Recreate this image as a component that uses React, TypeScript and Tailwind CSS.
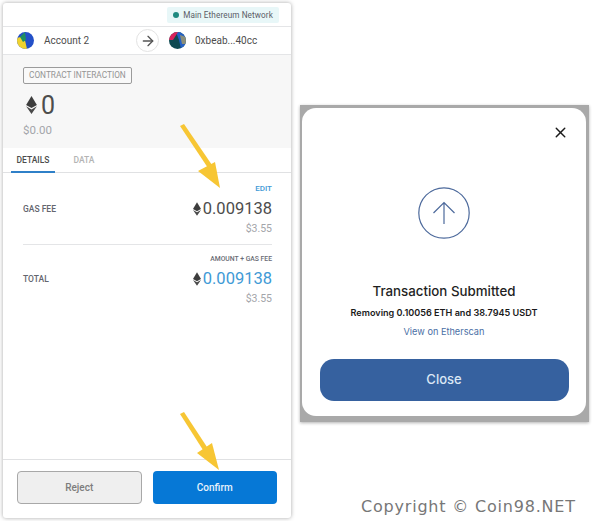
import { ArrowRight, X } from "lucide-react";

const sans = "font-['Roboto',sans-serif]";

function EthIcon({ className }: { className?: string }) {
  return (
    <svg viewBox="0 0 12 20" className={className}>
      <path d="M6 0L0 10l6 3.4L12 10z" fill="#3d3d3d" />
      <path d="M0 11.4L6 20l6-8.6-6 3.5z" fill="#4a4a4a" />
    </svg>
  );
}

function Avatar({ variant }: { variant: "a" | "b" }) {
  return (
    <svg viewBox="0 0 17 17" className="w-[17px] h-[17px] shrink-0 rounded-full">
      {variant === "a" ? (
        <>
          <rect width="17" height="17" fill="#2350c8" />
          <path d="M0 6l7-2 3 13H0z" fill="#f0d32e" />
          <path d="M3 5l5-5 1 8-3 2z" fill="#1f8f5f" />
        </>
      ) : (
        <>
          <rect width="17" height="17" fill="#0f4a52" />
          <path d="M7 0h10v13l-5 4-2-9z" fill="#2460c4" />
          <path d="M0 0h9L4 8H0z" fill="#d8225c" />
          <path d="M11 3l6 2v7h-4z" fill="#e0b43a" opacity="0.55" />
        </>
      )}
    </svg>
  );
}

function FeeRow({
  label,
  caption,
  amount,
  amountClass,
  captionClass,
}: {
  label: string;
  caption: string;
  amount: string;
  amountClass: string;
  captionClass: string;
}) {
  return (
    <div className="flex items-center justify-between">
      <span className="text-[8.5px] font-medium text-[#63656e]">{label}</span>
      <div className="flex flex-col items-end">
        <span className={captionClass}>{caption}</span>
        <div className="flex items-center h-[22px] mt-[3px]">
          <EthIcon className="w-[8px] h-[14px] mr-[2px]" />
          <span className={amountClass}>{amount}</span>
        </div>
        <span className="text-[10.5px] leading-[14px] text-[#a3a5aa] mt-[2px]">$3.55</span>
      </div>
    </div>
  );
}

export default function App() {
  return (
    <div className={`relative w-[593px] h-[521px] overflow-hidden bg-white flex items-start ${sans}`}>
      {/* Confirm panel */}
      <div className="ml-[3px] mt-[3px] w-[288px] h-[515px] flex flex-col shrink-0 rounded-[3px] bg-white shadow-[0_0_4px_rgba(0,0,0,0.35)]">
        <div className="h-[23px] flex items-center justify-end pr-[12px]">
          <div className="h-[16px] mt-[1px] px-[6px] flex items-center gap-[4px] bg-[#e8f7f8] rounded-[2px]">
            <span className="w-[6px] h-[6px] rounded-full bg-[#1f8a80]" />
            <span className="text-[8.2px] text-[#5b5d67] tracking-[0.1px]">Main Ethereum Network</span>
          </div>
        </div>

        <div className="h-[29px] flex items-center border-y border-[#e4e5e7] pl-[14px]">
          <Avatar variant="a" />
          <span className="ml-[10px] text-[10px] text-[#4d4d4d] w-[92px]">Account 2</span>
          <div className="w-[23px] h-[23px] rounded-full border border-[#e3e3e3] bg-white flex items-center justify-center">
            <ArrowRight className="w-[16px] h-[16px] text-[#555]" strokeWidth={2} />
          </div>
          <div className="ml-[10px]">
            <Avatar variant="b" />
          </div>
          <span className="ml-[9px] text-[10px] text-[#4d4d4d]">0xbeab...40cc</span>
        </div>

        <div className="h-[93px] bg-[#f7f7f7] px-[20px] pt-[12px] flex flex-col items-start">
          <div className="h-[17px] px-[5px] border border-[#9b9b9b] rounded-[2px] flex items-center text-[8.3px] text-[#949494] bg-[#f9f9f9]">
            CONTRACT INTERACTION
          </div>
          <div className="flex items-center h-[30px] mt-[6px] ml-[3px]">
            <EthIcon className="w-[11px] h-[18px] mr-[4px]" />
            <span className="text-[25px] leading-none text-[#4d4d4d]">0</span>
          </div>
          <span className="mt-[2px] text-[11.5px] text-[#a3a5aa]">$0.00</span>
        </div>

        <div className="h-[25px] flex items-end border-b border-[#e0e1e3] pl-[8px]">
          <div className="w-[44px] h-[24px] flex items-center justify-center border-b-2 border-[#2f80c8] -mb-[1px] text-[8.5px] font-medium text-[#4d4d4d]">
            DETAILS
          </div>
          <div className="ml-[7px] w-[44px] h-[24px] flex items-center justify-center text-[8.5px] font-medium text-[#b4b4b4]">
            DATA
          </div>
        </div>

        <div className="flex-1 flex flex-col pl-[20px] pr-[19px] pt-[10px]">
          <FeeRow
            label="GAS FEE"
            caption="EDIT"
            captionClass="text-[8px] leading-[12px] font-medium text-[#3f9ad6]"
            amount="0.009138"
            amountClass="text-[16.5px] leading-none text-[#4d4d4d]"
          />
          <div className="h-px bg-[#e4e5e7] mt-[8px] mb-[8px]" />
          <FeeRow
            label="TOTAL"
            caption="AMOUNT + GAS FEE"
            captionClass="text-[6.8px] leading-[12px] font-medium text-[#6a6c75]"
            amount="0.009138"
            amountClass="text-[16.5px] leading-none text-[#3f9ad6]"
          />
        </div>

        <div className="h-[59px] border-t border-[#e0e1e3] flex items-start gap-[11px] px-[14px] pt-[11px]">
          <button className="w-[125px] h-[33px] rounded-[4px] border border-[#a8a8a8] bg-[#efefef] text-[10px] font-medium text-[#7d7d7d]">
            Reject
          </button>
          <button className="w-[125px] h-[33px] rounded-[4px] bg-[#0678d6] text-[10px] font-medium text-[#e8f3fc]">
            Confirm
          </button>
        </div>
      </div>

      {/* Submitted dialog */}
      <div className="ml-[9px] mt-[105px] w-[289px] h-[317px] shrink-0 bg-[#a9a9a9] pt-[3px] pl-[2px] pr-[3px] pb-[6px] shadow-[0_1px_3px_rgba(0,0,0,0.3)]">
        <div className="h-full bg-white rounded-[14px] flex flex-col items-center relative font-['Inter',sans-serif]">
          <X className="absolute top-[16px] right-[17px] w-[17px] h-[17px] text-[#1a1a1a]" strokeWidth={2} />
          <svg viewBox="0 0 52 52" className="w-[52px] h-[52px] mt-[79px] text-[#4d6a9c]" fill="none" stroke="currentColor">
            <circle cx="26" cy="26" r="25.2" strokeWidth="1.2" />
            <path d="M26 37V15.5M15.5 26L26 15.5 36.5 26" strokeWidth="1.2" />
          </svg>
          <div className="mt-[42px] text-[13.3px] leading-[20px] font-medium text-[#1f1f1f]">Transaction Submitted</div>
          <div className="mt-[5px] text-[9.1px] leading-[14px] font-semibold text-[#1a1a1a]">
            Removing 0.10056 ETH and 38.7945 USDT
          </div>
          <div className="mt-[5px] text-[9.2px] leading-[14px] text-[#4a6fa5]">View on Etherscan</div>
          <button className="mt-[20px] w-[249px] h-[42px] rounded-[14px] bg-[#36619f] text-[13px] font-medium text-[#dbe7f5]">
            Close
          </button>
        </div>
      </div>

      {/* Annotations */}
      <svg viewBox="0 0 593 521" className="absolute inset-0 w-[593px] h-[521px] pointer-events-none">
        <g fill="#f7c634">
          <path d="M180 126l4-2 28 41-4 3z" />
          <path d="M198 171l17-9 5 26z" />
          <path d="M180 414l4-2 23 35-4 3z" />
          <path d="M197 453l15-10 7 27z" />
        </g>
      </svg>
      <span className="absolute left-[361px] top-[498px] text-[16px] leading-[18px] tracking-[0.8px] text-[#777777] font-['DejaVu_Sans',sans-serif]">
        Copyright © Coin98.NET
      </span>
    </div>
  );
}
